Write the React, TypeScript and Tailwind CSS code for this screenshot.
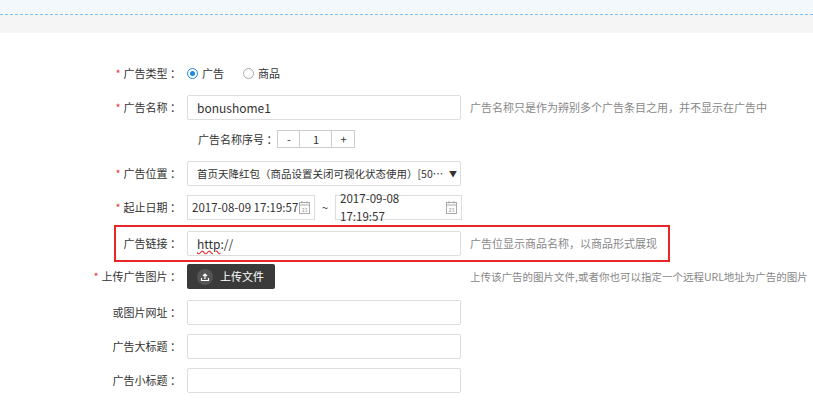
import React from "react";

const font = { fontFamily: '"Microsoft YaHei","Noto Sans CJK SC",sans-serif' };

function Label({ text, req }: { text: string; req?: boolean }) {
  return (
    <div className="w-[187px] shrink-0 pr-[6px] text-right text-[11px] text-[#333]">
      {req && <span className="text-[#e4393c] mr-[3px]">*</span>}
      {text} ：
    </div>
  );
}

function Cal() {
  return (
    <svg width="11" height="13" viewBox="0 0 11 13" className="shrink-0">
      <rect x="0.5" y="1.5" width="10" height="11" fill="none" stroke="#aaa" />
      <line x1="0.5" y1="4" x2="10.5" y2="4" stroke="#aaa" />
      <line x1="3" y1="0" x2="3" y2="2.5" stroke="#aaa" />
      <line x1="8" y1="0" x2="8" y2="2.5" stroke="#aaa" />
      <text x="5.5" y="10.5" fontSize="5" textAnchor="middle" fill="#999">23</text>
    </svg>
  );
}

const input = "h-[25px] w-[274px] border border-[#ddd] rounded-[2px] bg-white";

export default function App() {
  return (
    <div className="w-[813px] h-[413px] bg-white overflow-hidden" style={font}>
      <div className="h-[15px] bg-[#f3f8fd] border-b border-dashed border-[#7cc0ef]" />
      <div className="h-[18px] bg-[#f5f5f5]" />
      <div className="pt-[31px] flex flex-col">
        <div className="flex items-center h-[18px]">
          <Label text="广告类型" req />
          <span className="w-[11px] h-[11px] rounded-full border border-[#1e88e5] flex items-center justify-center">
            <span className="w-[5px] h-[5px] rounded-full bg-[#1e88e5]" />
          </span>
          <span className="ml-[4px] text-[11px] text-[#333]">广告</span>
          <span className="ml-[19px] w-[11px] h-[11px] rounded-full border border-[#aaa]" />
          <span className="ml-[4px] text-[11px] text-[#333]">商品</span>
        </div>
        <div className="flex items-center mt-[13px]">
          <Label text="广告名称" req />
          <div className={`${input} flex items-center px-[9px] text-[12px] text-[#333]`}>bonushome1</div>
          <span className="ml-[9px] text-[11px] text-[#888]">广告名称只是作为辨别多个广告条目之用，并不显示在广告中</span>
        </div>
        <div className="flex items-center mt-[10px] pl-[198px]">
          <span className="text-[11px] text-[#333]">广告名称序号 ：</span>
          <div className="flex h-[18px] border border-[#ccc] text-[11px] text-[#333]">
            <span className="w-[22px] flex items-center justify-center border-r border-[#ccc]">-</span>
            <span className="w-[32px] flex items-center justify-center border-r border-[#ccc]">1</span>
            <span className="w-[22px] flex items-center justify-center">+</span>
          </div>
        </div>
        <div className="flex items-center mt-[13px]">
          <Label text="广告位置" req />
          <div className={`${input} flex items-center pl-[9px] pr-[3px] text-[10.5px] text-[#333] whitespace-nowrap`}>
            <span className="flex-1 min-w-0 truncate">首页天降红包（商品设置关闭可视化状态使用）[500x..</span>
            <span className="text-[8px] ml-[1px]">▼</span>
          </div>
        </div>
        <div className="flex items-center mt-[9px]">
          <Label text="起止日期" req />
          <div className="h-[25px] w-[128px] border border-[#ddd] flex items-center justify-between px-[4px] text-[11.5px] text-[#333]">
            2017-08-09 17:19:57<Cal />
          </div>
          <span className="mx-[7px] text-[11px] text-[#333]">~</span>
          <div className="h-[25px] w-[127px] border border-[#ddd] flex items-center justify-between px-[4px] text-[11.5px] text-[#333]">
            2017-09-08 17:19:57<Cal />
          </div>
        </div>
        <div className="mt-[5px] ml-[114px] w-[556px] h-[37px] border-2 border-[#e8262a] flex items-center">
          <div className="w-[71px] shrink-0 pr-[6px] text-right text-[11px] text-[#333]">广告链接 ：</div>
          <div className={`${input} border-[#8ec3f0] flex items-center px-[9px] text-[12px] text-[#333]`}>
            <span className="underline decoration-wavy decoration-[#e33]">http</span>://
          </div>
          <span className="ml-[9px] text-[11px] text-[#888]">广告位显示商品名称，以商品形式展现</span>
        </div>
        <div className="flex items-center mt-[2px]">
          <Label text="上传广告图片" req />
          <div className="h-[25px] w-[88px] bg-[#3a3a3a] rounded-[2px] flex items-center pl-[10px] text-[11px] text-white">
            <span className="w-[16px] h-[16px] rounded-full bg-[#555] flex items-center justify-center">
              <svg width="10" height="10" viewBox="0 0 10 10" fill="none" stroke="#fff" strokeWidth="1.2">
                <path d="M5 7V2M3 4l2-2 2 2M1.5 6v2.5h7V6" />
              </svg>
            </span>
            <span className="ml-[7px]">上传文件</span>
          </div>
          <span className="ml-[195px] text-[10.5px] text-[#888] whitespace-nowrap">上传该广告的图片文件,或者你也可以指定一个远程URL地址为广告的图片</span>
        </div>
        <div className="flex items-center mt-[11px]">
          <Label text="或图片网址" />
          <div className={input} />
        </div>
        <div className="flex items-center mt-[9px]">
          <Label text="广告大标题" />
          <div className={input} />
        </div>
        <div className="flex items-center mt-[9px]">
          <Label text="广告小标题" />
          <div className={input} />
        </div>
      </div>
    </div>
  );
}
